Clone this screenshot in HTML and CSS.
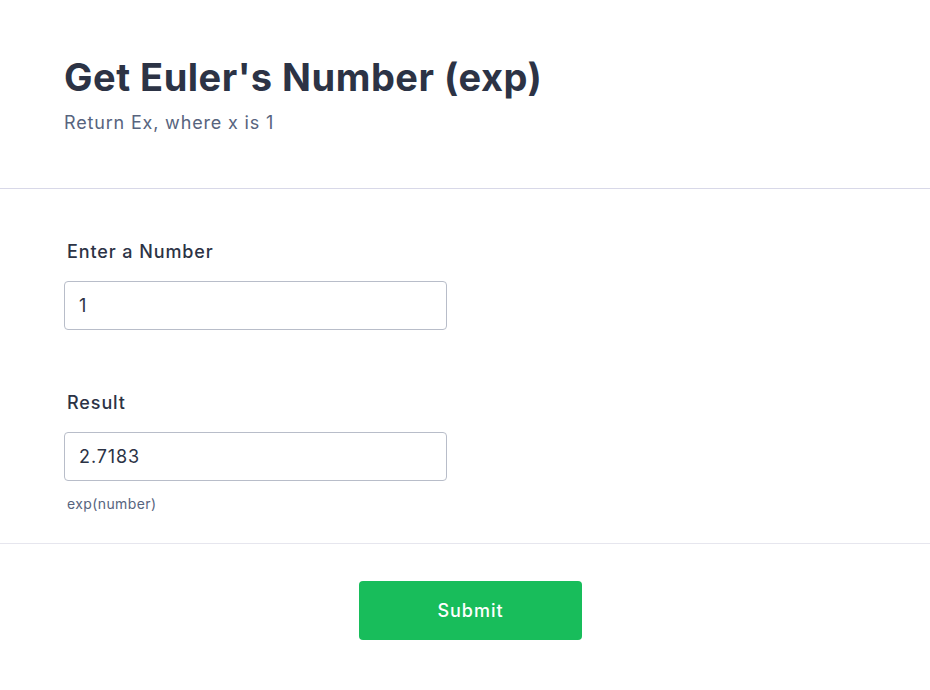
FILE: index.html
```html
<!DOCTYPE html>
<html>
<head>
<meta charset="utf-8">
<link rel="stylesheet" href="styles.css">
</head>
<body>
<div class="form">
  <header class="header">
    <h1 class="title">Get Euler's Number (exp)</h1>
    <p class="subtitle">Return Ex, where x is 1</p>
  </header>
  <section class="fields">
    <div class="field">
      <label class="label">Enter a Number</label>
      <div class="input">1</div>
    </div>
    <div class="field">
      <label class="label">Result</label>
      <div class="input">2.7183</div>
      <div class="hint">exp(number)</div>
    </div>
  </section>
  <footer class="footer">
    <button class="submit">Submit</button>
  </footer>
</div>
</body>
</html>
```
FILE: styles.css
```css
html, body {
  margin: 0;
  padding: 0;
  background: #ffffff;
}
body {
  font-family: Inter, "Noto Sans", sans-serif;
  color: #2c3345;
}
.header {
  padding: 53px 64px 0 64px;
  height: 135px;
  border-bottom: 1px solid #d8d8e8;
}
.title {
  margin: 0;
  font-size: 38px;
  font-weight: 700;
  line-height: 48px;
  letter-spacing: 0.5px;
  color: #2c3345;
}
.subtitle {
  margin: 10px 0 0 0;
  font-size: 18px;
  line-height: 24px;
  letter-spacing: 0.83px;
  color: #57647e;
}
.fields {
  padding: 51px 64px 0 64px;
  height: 303px;
  border-bottom: 1px solid #e6e6ee;
}
.field {
  margin-bottom: 61px;
}
.label {
  display: block;
  font-size: 18px;
  font-weight: 500;
  line-height: 24px;
  letter-spacing: 0.9px;
  color: #2c3345;
  padding-left: 3px;
  margin-bottom: 17px;
}
.input {
  box-sizing: border-box;
  width: 383px;
  height: 49px;
  border: 1px solid #b8bdc9;
  border-radius: 4px;
  padding: 0 14px;
  font-size: 18px;
  line-height: 47px;
  letter-spacing: 0.9px;
  color: #2c3345;
}
.hint {
  margin-top: 14px;
  padding-left: 3px;
  font-size: 14px;
  line-height: 18px;
  letter-spacing: 0.4px;
  color: #57647e;
}
.footer {
  display: flex;
  justify-content: center;
  padding-top: 37px;
  padding-left: 11px;
}
.submit {
  width: 223px;
  height: 59px;
  border: 0;
  border-radius: 4px;
  background: #18bd5b;
  color: #ffffff;
  font-family: Inter, "Noto Sans", sans-serif;
  font-size: 18px;
  font-weight: 500;
  letter-spacing: 1px;
}
```
